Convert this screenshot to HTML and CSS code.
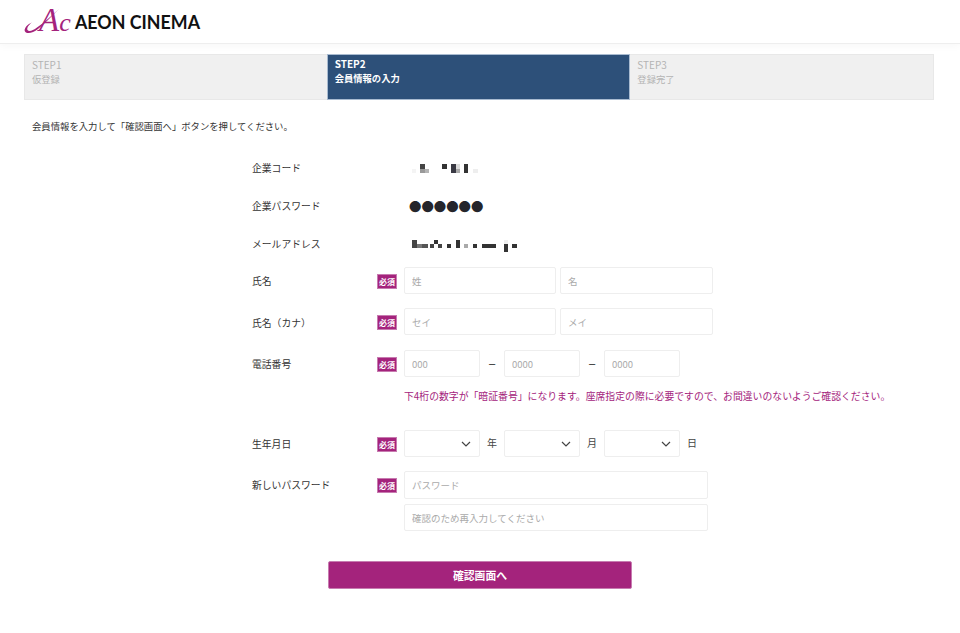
FILE: index.html
```html
<!DOCTYPE html>
<html lang="ja">
<head>
<meta charset="utf-8">
<title>AEON CINEMA 会員情報の入力</title>
<link rel="stylesheet" href="styles.css">
</head>
<body>
<header class="site-header">
  <svg class="logo" width="180" height="30" viewBox="0 0 180 30" role="img" aria-label="AEON CINEMA">
    <path class="logo-swoosh" d="M9 15C3 17-.5 22 1 24.5 3 27.5 9 26 14 22 20 17 27 10 35 2 28 8 21 15 13 20.5 9 23.5 5 25 3.5 23 2.5 21 5 17 9 15Z" />
    <text class="logo-ac" x="15" y="23.5"><tspan class="logo-a">A</tspan><tspan class="logo-c">c</tspan></text>
    <text class="logo-name" x="51" y="22" textLength="125" lengthAdjust="spacingAndGlyphs">AEON CINEMA</text>
  </svg>
</header>

<ol class="steps">
  <li class="step"><span>STEP1</span><span class="step-name">仮登録</span></li>
  <li class="step step-active"><span>STEP2</span><span class="step-name">会員情報の入力</span></li>
  <li class="step"><span>STEP3</span><span class="step-name">登録完了</span></li>
</ol>

<p class="lead">会員情報を入力して「確認画面へ」ボタンを押してください。</p>

<form class="form">
  <div class="row row-static">
    <div class="label">企業コード</div>
    <div class="spacer"></div>
    <svg class="mosaic" width="110" height="14" viewBox="412 164 110 14" aria-hidden="true">
      <rect x="412" y="171" width="4" height="4" fill="#f4f4f4"/>
      <rect x="420" y="166" width="5" height="5" fill="#444"/>
      <rect x="420" y="171" width="5" height="4" fill="#999"/>
      <rect x="425" y="171" width="4" height="4" fill="#b5b5b5"/>
      <rect x="442" y="166" width="5" height="5" fill="#333"/>
      <rect x="451" y="166" width="5" height="9" fill="#3a3a44"/>
      <rect x="456" y="166" width="4" height="5" fill="#ddd"/>
      <rect x="456" y="171" width="4" height="4" fill="#aaa"/>
      <rect x="464" y="166" width="4" height="9" fill="#333"/>
      <rect x="473" y="171" width="5" height="4" fill="#eee"/>
    </svg>
  </div>
  <div class="row row-static">
    <div class="label">企業パスワード</div>
    <div class="spacer"></div>
    <div class="dots">●●●●●●</div>
  </div>
  <div class="row row-static row-mail">
    <div class="label">メールアドレス</div>
    <div class="spacer"></div>
    <svg class="mosaic" width="110" height="14" viewBox="412 241 110 14" aria-hidden="true">
      <rect x="412" y="241" width="5" height="8" fill="#444"/>
      <rect x="417" y="245" width="5" height="4" fill="#777"/>
      <rect x="422" y="245" width="6" height="4" fill="#555"/>
      <rect x="434" y="241" width="4" height="4" fill="#333"/>
      <rect x="430" y="245" width="4" height="4" fill="#444"/>
      <rect x="438" y="245" width="4" height="4" fill="#444"/>
      <rect x="447" y="245" width="4" height="4" fill="#333"/>
      <rect x="456" y="241" width="4" height="8" fill="#333"/>
      <rect x="464" y="245" width="4" height="4" fill="#aaa"/>
      <rect x="473" y="245" width="4" height="4" fill="#333"/>
      <rect x="482" y="245" width="14" height="4" fill="#333"/>
      <rect x="504" y="241" width="4" height="4" fill="#eee"/>
      <rect x="504" y="245" width="4" height="8" fill="#333"/>
      <rect x="512" y="245" width="5" height="4" fill="#333"/>
    </svg>
  </div>

  <div class="row row-name">
    <div class="label">氏名</div>
    <div class="badge">必須</div>
    <div class="fields">
      <input class="input w-half" placeholder="姓">
      <input class="input w-half2" placeholder="名">
    </div>
  </div>
  <div class="row row-kana">
    <div class="label">氏名（カナ）</div>
    <div class="badge">必須</div>
    <div class="fields">
      <input class="input w-half" placeholder="セイ">
      <input class="input w-half2" placeholder="メイ">
    </div>
  </div>
  <div class="row row-tel">
    <div class="label">電話番号</div>
    <div class="badge">必須</div>
    <div class="fields fields-tel">
      <input class="input w-part" placeholder="000">
      <span class="sep sep-dash">−</span>
      <input class="input w-part" placeholder="0000">
      <span class="sep sep-dash">−</span>
      <input class="input w-part" placeholder="0000">
    </div>
  </div>
  <p class="notice">下4桁の数字が「暗証番号」になります。座席指定の際に必要ですので、お間違いのないようご確認ください。</p>

  <div class="row row-birth">
    <div class="label">生年月日</div>
    <div class="badge">必須</div>
    <div class="fields fields-tel">
      <div class="select"><svg class="chevron" width="10" height="6" viewBox="0 0 10 6"><path d="M1 1l4 4 4-4"/></svg></div>
      <span class="sep sep-text">年</span>
      <div class="select"><svg class="chevron" width="10" height="6" viewBox="0 0 10 6"><path d="M1 1l4 4 4-4"/></svg></div>
      <span class="sep sep-text">月</span>
      <div class="select"><svg class="chevron" width="10" height="6" viewBox="0 0 10 6"><path d="M1 1l4 4 4-4"/></svg></div>
      <span class="sep sep-text sep-last">日</span>
    </div>
  </div>
  <div class="row row-pass">
    <div class="label">新しいパスワード</div>
    <div class="badge">必須</div>
    <div class="fields fields-col">
      <input class="input w-full input-tall" type="password" placeholder="パスワード">
      <input class="input w-full" type="password" placeholder="確認のため再入力してください">
    </div>
  </div>

  <button class="submit" type="button">確認画面へ</button>
</form>
</body>
</html>
```
FILE: styles.css
```css
* { box-sizing: border-box; }
html, body { margin: 0; padding: 0; background: #fff; }
body {
  font-family: "Noto Sans CJK JP", "Noto Sans", sans-serif;
  font-size: 10px;
  color: #333;
  height: 633px;
  overflow: hidden;
}

.site-header {
  height: 44px;
  padding: 7px 0 0 24px;
  border-bottom: 1px solid #eee;
  box-shadow: 0 2px 8px rgba(0, 0, 0, .035);
}
.logo { display: block; overflow: visible; }
.logo-swoosh { fill: #a4237c; }
.logo-ac {
  font-family: "Liberation Serif", serif;
  font-style: italic;
  fill: #a4237c;
}
.logo-a { font-size: 33px; }
.logo-c { font-size: 26px; }
.logo-name {
  font-family: "Lato", sans-serif;
  font-weight: 700;
  font-size: 19.5px;
  fill: #111;
}

.steps {
  list-style: none;
  display: flex;
  width: 910px;
  height: 46px;
  margin: 10px 0 0 24px;
  padding: 0;
  background: #f0f0f0;
  border: 1px solid #e8e8e8;
}
.step {
  flex: 1 1 0;
  display: flex;
  flex-direction: column;
  padding: 3px 7px;
  color: #b4b4b4;
  line-height: 14px;
  font-size: 10px;
}
.step-name { font-size: 9.3px; }
.step-active {
  background: #2d5079;
  color: #fff;
  font-weight: 700;
  outline: 1px solid #a9bbd0;
  outline-offset: -1px;
  margin: -1px 0 -1px -1px;
  padding: 3px 7px 3px 8px;
  height: 46px;
}

.lead {
  margin: 19px 0 0 32px;
  font-size: 9.35px;
  line-height: 14px;
}

.form {
  width: 456px;
  margin: 0 auto;
}
.row { display: flex; align-items: flex-start; }
.label { width: 125px; flex: none; font-size: 9.8px; line-height: 14px; white-space: nowrap; }
.spacer { width: 27px; flex: none; }
.badge {
  width: 20px;
  height: 15px;
  flex: none;
  margin-right: 7px;
  background: #a4237c;
  color: #fff;
  border: 1px solid #c77bb0;
  font-size: 8px;
  font-weight: 700;
  line-height: 13px;
  text-align: center;
  white-space: nowrap;
}

.row-static { height: 38px; }
.row-static:first-child { margin-top: 28px; }
.row-mail { height: 30px; }
.mosaic { display: block; margin-top: 1px; margin-left: 8px; }
.row-mail .mosaic { margin-top: 3px; }
.dots { margin: 1px 0 0 5px; font-size: 12.4px; line-height: 14px; color: #25252b; white-space: nowrap; }

.fields { display: flex; gap: 4px; }
.fields-tel { gap: 0; }
.fields-col { flex-direction: column; gap: 5px; }
.input {
  height: 27px;
  padding: 0 7px;
  border: 1px solid #eee;
  border-radius: 2px;
  background: #fff;
  font: inherit;
  font-size: 9.5px;
  color: #333;
  outline: none;
}
.input::placeholder { color: #aaa; opacity: 1; }
.w-half { width: 152px; }
.w-half2 { width: 153px; }
.w-part { width: 76px; }
.w-full { width: 304px; }
.input-tall { height: 28px; }

.sep { width: 24px; text-align: center; line-height: 27px; font-size: 10px; flex: none; color: #444; }
.sep-dash { font-size: 13px; }
.sep-text { line-height: 25px; }
.sep-last { margin-right: -24px; }

.select {
  position: relative;
  width: 76px;
  height: 27px;
  border: 1px solid #eee;
  border-radius: 2px;
  background: #fff;
}
.chevron { position: absolute; right: 8px; top: 10px; fill: none; stroke: #444; stroke-width: 1.2; }

.row-kana { margin-top: 14px; }
.row-tel { margin-top: 15px; }
.row-name .label, .row-tel .label { padding-top: 7px; }
.row-kana .label { padding-top: 8px; }
.row-name .badge, .row-kana .badge, .row-tel .badge { margin-top: 7px; }

.notice {
  margin: 12px 0 0 152px;
  color: #a4237c;
  font-size: 9.86px;
  line-height: 14px;
  white-space: nowrap;
}

.row-birth { margin-top: 27px; }
.row-birth .label { padding-top: 7px; }
.row-birth .badge { margin-top: 7px; }
.row-pass { margin-top: 14px; }
.row-pass .label { padding-top: 7px; }
.row-pass .badge { margin-top: 7px; }

.submit {
  display: block;
  width: 304px;
  height: 28px;
  margin: 30px 0 0 76px;
  padding: 0;
  border: 1px solid #c77bb0;
  border-radius: 2px;
  background: #a4237c;
  color: #fff;
  font: inherit;
  font-size: 10.8px;
  font-weight: 700;
}
```
